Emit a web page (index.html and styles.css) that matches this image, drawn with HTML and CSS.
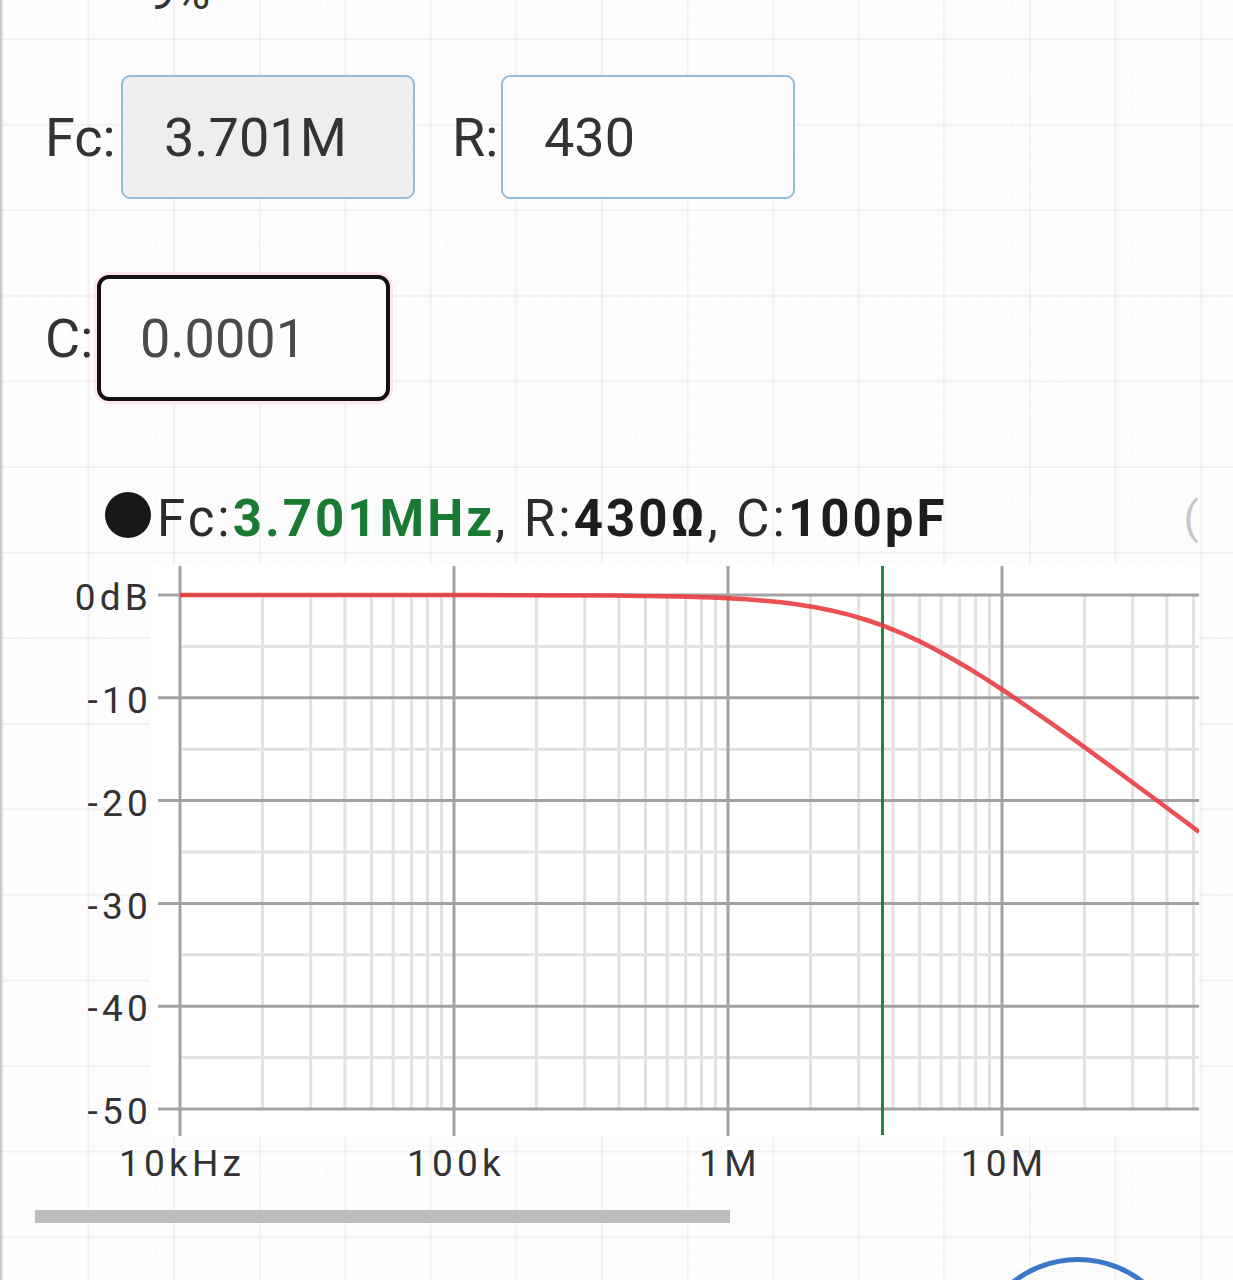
FILE: index.html
```html
<!DOCTYPE html>
<html>
<head>
<meta charset="utf-8">
<link rel="stylesheet" href="styles.css">
</head>
<body>
<div class="page">
  <div class="cut"><span class="cut-text">9%</span></div>

  <div class="row row-first">
    <span class="lbl lbl-fc">Fc:</span>
    <input class="box box-fc" value="3.701M" readonly>
    <span class="lbl lbl-r">R:</span>
    <input class="box box-r" value="430" readonly>
  </div>

  <div class="row row-second">
    <span class="lbl lbl-c">C:</span>
    <input class="box box-c" value="0.0001" readonly>
  </div>

  <div class="scroller">
    <div class="legend">
      <span class="dot"></span>
      <span class="legend-text">Fc:<b class="green">3.701MHz</b>, R:<b>430Ω</b>, C:<b>100pF</b></span>
      <span class="legend-next">(</span>
    </div>

    <svg class="chart" width="1199" height="640" viewBox="0 560 1199 640" xmlns="http://www.w3.org/2000/svg">
      <rect x="150" y="566" width="1049" height="571" fill="#ffffff"/>
      <!-- minor horizontal lines -->
      <g stroke="#e2e2e2" stroke-width="3">
        <line x1="180" y1="647.4" x2="1199" y2="647.4"/>
        <line x1="180" y1="750.2" x2="1199" y2="750.2"/>
        <line x1="180" y1="853" x2="1199" y2="853"/>
        <line x1="180" y1="955.8" x2="1199" y2="955.8"/>
        <line x1="180" y1="1058.6" x2="1199" y2="1058.6"/>
      </g>
      <!-- minor vertical lines -->
      <g stroke="#e2e2e2" stroke-width="3">
        <line x1="262.5" y1="596" x2="262.5" y2="1110"/>
        <line x1="310.7" y1="596" x2="310.7" y2="1110"/>
        <line x1="344.9" y1="596" x2="344.9" y2="1110"/>
        <line x1="371.5" y1="596" x2="371.5" y2="1110"/>
        <line x1="393.2" y1="596" x2="393.2" y2="1110"/>
        <line x1="411.6" y1="596" x2="411.6" y2="1110"/>
        <line x1="427.5" y1="596" x2="427.5" y2="1110"/>
        <line x1="441.5" y1="596" x2="441.5" y2="1110"/>

        <line x1="536.5" y1="596" x2="536.5" y2="1110"/>
        <line x1="584.7" y1="596" x2="584.7" y2="1110"/>
        <line x1="618.9" y1="596" x2="618.9" y2="1110"/>
        <line x1="645.5" y1="596" x2="645.5" y2="1110"/>
        <line x1="667.2" y1="596" x2="667.2" y2="1110"/>
        <line x1="685.6" y1="596" x2="685.6" y2="1110"/>
        <line x1="701.5" y1="596" x2="701.5" y2="1110"/>
        <line x1="715.5" y1="596" x2="715.5" y2="1110"/>

        <line x1="810.5" y1="596" x2="810.5" y2="1110"/>
        <line x1="858.7" y1="596" x2="858.7" y2="1110"/>
        <line x1="892.9" y1="596" x2="892.9" y2="1110"/>
        <line x1="919.5" y1="596" x2="919.5" y2="1110"/>
        <line x1="941.2" y1="596" x2="941.2" y2="1110"/>
        <line x1="959.6" y1="596" x2="959.6" y2="1110"/>
        <line x1="975.5" y1="596" x2="975.5" y2="1110"/>
        <line x1="989.5" y1="596" x2="989.5" y2="1110"/>

        <line x1="1084.5" y1="596" x2="1084.5" y2="1110"/>
        <line x1="1132.7" y1="596" x2="1132.7" y2="1110"/>
        <line x1="1166.9" y1="596" x2="1166.9" y2="1110"/>
        <line x1="1193.5" y1="596" x2="1193.5" y2="1110"/>
      </g>
      <!-- major horizontal lines -->
      <g stroke="#a3a3a3" stroke-width="3">
        <line x1="158" y1="596" x2="1199" y2="596"/>
        <line x1="158" y1="698.8" x2="1199" y2="698.8"/>
        <line x1="158" y1="801.6" x2="1199" y2="801.6"/>
        <line x1="158" y1="904.4" x2="1199" y2="904.4"/>
        <line x1="158" y1="1007.2" x2="1199" y2="1007.2"/>
        <line x1="158" y1="1110" x2="1199" y2="1110"/>
      </g>
      <!-- major vertical lines -->
      <g stroke="#a3a3a3" stroke-width="3">
        <line x1="180" y1="567" x2="180" y2="1137"/>
        <line x1="454" y1="567" x2="454" y2="1137"/>
        <line x1="728" y1="567" x2="728" y2="1137"/>
        <line x1="1002" y1="567" x2="1002" y2="1137"/>
      </g>
      <!-- cutoff marker -->
      <line x1="882.5" y1="567" x2="882.5" y2="1136" stroke="#1f8a3d" stroke-width="3"/>
      <!-- response curve -->
      <polyline fill="none" stroke="#e8383b" stroke-opacity="0.88" stroke-width="4.5" stroke-linejoin="round"
        points="180,596 472.7,596.04 609.7,596.44 678.2,597.39 712.45,598.4 746.7,600.26 781,603.3 798.1,605.5 815.2,608.3 832.4,611.7 849.5,615.9 866.6,621 883.7,626.9 900.8,633.8 917.95,641.6 935.1,650.3 952.2,659.7 969.3,669.7 986.45,680.4 1003.6,691.5 1020.7,703.1 1054.95,726.9 1089.2,751.6 1123.45,776.7 1157.7,802 1199,832.9"/>
      <!-- y labels -->
      <g class="axis-label" text-anchor="end">
        <text x="152" y="611">0dB</text>
        <text x="152" y="714">-10</text>
        <text x="152" y="817">-20</text>
        <text x="152" y="920">-30</text>
        <text x="152" y="1022">-40</text>
        <text x="152" y="1125">-50</text>
      </g>
      <!-- x labels -->
      <g class="axis-label" text-anchor="middle">
        <text x="182" y="1177">10kHz</text>
        <text x="456" y="1177">100k</text>
        <text x="730" y="1177">1M</text>
        <text x="1004" y="1177">10M</text>
      </g>
    </svg>

    <div class="hscroll"></div>
  </div>

  <div class="fab"></div>
</div>
</body>
</html>
```

FILE: styles.css
```css
html, body {
  margin: 0;
  padding: 0;
  height: 1280px;
  overflow: hidden;
}

body {
  font-family: Roboto, "Noto Sans", "Liberation Sans", sans-serif;
  color: #333;
  background-color: #fdfdfe;
  background-image:
    linear-gradient(90deg, #cacaca 0 2px, transparent 2px),
    linear-gradient(90deg, rgba(20, 20, 60, 0.04) 0 2px, transparent 2px),
    linear-gradient(0deg, rgba(20, 20, 60, 0.04) 0 2px, transparent 2px),
    linear-gradient(90deg, rgba(20, 20, 60, 0.02) 0 1px, transparent 1px),
    linear-gradient(0deg, rgba(20, 20, 60, 0.02) 0 1px, transparent 1px);
  background-size: 100% 100%, 85.6px 85.6px, 85.6px 85.6px, 17.12px 17.12px, 17.12px 17.12px;
  background-position: 0 0, 2px 40px, 2px 40px, 2px 40px, 2px 40px;
}

.page {
  position: relative;
  width: 1233px;
}

.cut {
  height: 12px;
  overflow: hidden;
  padding-left: 148px;
}

.cut-text {
  display: block;
  font-size: 48px;
  line-height: 48px;
  margin-top: -31px;
  color: #333;
}

.row {
  display: flex;
  align-items: center;
  padding-left: 45px;
}

.row-first {
  margin-top: 63px;
}

.row-second {
  margin-top: 76px;
}

.lbl {
  font-size: 54px;
  color: #333;
  flex: none;
}

.lbl-fc { width: 76px; }
.lbl-r { width: 49px; margin-left: 37px; }
.lbl-c { width: 52px; }

.box {
  box-sizing: border-box;
  width: 294px;
  height: 124px;
  font-family: Roboto, "Noto Sans", "Liberation Sans", sans-serif;
  font-size: 54px;
  color: #333;
  padding: 0 0 0 41px;
  margin: 0;
  outline: none;
  border: 2px solid #94bbd8;
  border-radius: 9px;
  background: #fdfdfd;
}

.box-fc {
  background: #eeeeee;
}

.box-c {
  width: 293px;
  height: 126px;
  border: 4.5px solid #121212;
  border-radius: 12px;
  padding-left: 39px;
  color: #4a4a4a;
  box-shadow: 0 0 0 3px #fde6ef;
}

.scroller {
  width: 1199px;
  overflow: hidden;
}

.legend {
  display: flex;
  align-items: center;
  margin-top: 91px;
  padding-left: 105px;
  height: 46px;
  white-space: nowrap;
}

.dot {
  flex: none;
  width: 46px;
  height: 46px;
  border-radius: 50%;
  background: #181818;
  margin-right: 6px;
}

.legend-text {
  font-size: 51px;
  letter-spacing: 3px;
  color: #2b2b2b;
  position: relative;
  top: 3px;
}

.legend-text b {
  font-weight: 700;
  color: #1d1d1d;
}

.legend-text b.green {
  color: #1a7a33;
}

.legend-next {
  font-size: 44px;
  color: #c8c8c8;
  margin-left: 236px;
  position: relative;
  top: 3px;
}

.chart {
  display: block;
  margin-top: 21px;
}

.axis-label {
  font-family: Roboto, "Noto Sans", "Liberation Sans", sans-serif;
  font-size: 37px;
  letter-spacing: 4.2px;
  fill: #333;
}

.hscroll {
  margin: 11px 0 0 35px;
  width: 695px;
  height: 13px;
  background: #bdbdbd;
}

.fab {
  margin: 34px 0 0 971px;
  width: 214px;
  height: 214px;
  box-sizing: border-box;
  border: 5px solid #3b78c9;
  border-radius: 50%;
}
```
